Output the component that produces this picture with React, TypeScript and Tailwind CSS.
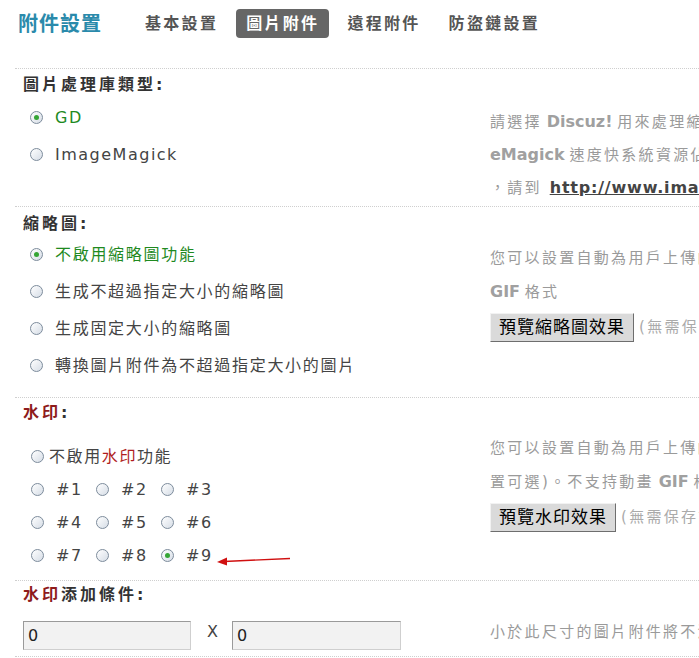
import React from "react";

function Radio({ checked = false }: { checked?: boolean }) {
  return (
    <span className="inline-flex w-[13px] h-[13px] shrink-0 items-center justify-center rounded-full border border-[#7d8c9c] bg-gradient-to-br from-white to-[#d6dde6]">
      {checked && <span className="block w-[5px] h-[5px] rounded-full bg-[#35a535]" />}
    </span>
  );
}

function Opt({ children, checked = false, latin = false }: { children: React.ReactNode; checked?: boolean; latin?: boolean }) {
  return (
    <div className="h-[37px] flex items-center">
      <span className="ml-[7px] flex">
        <Radio checked={checked} />
      </span>
      <span
        className={
          (latin ? "tracking-[1.5px] " : "tracking-[1.7px] ") +
          (checked ? "text-[#1f8a1f] " : "text-[#444] ") +
          "ml-[12px] text-[16px] leading-[20px]"
        }
      >
        {children}
      </span>
    </div>
  );
}

function Num({ n, checked = false }: { n: number; checked?: boolean }) {
  return (
    <div className="w-[65px] flex items-center shrink-0">
      <Radio checked={checked} />
      <span className="ml-[12px] text-[16px] tracking-[1.5px] text-[#444]">#{n}</span>
    </div>
  );
}

function Btn({ children }: { children: React.ReactNode }) {
  return (
    <span className="inline-flex items-center h-[29px] px-[8px] bg-[#dadada] border border-t-[#f2f2f2] border-l-[#f2f2f2] border-r-[#6e6e6e] border-b-[#6e6e6e] text-[17px] tracking-[1px] text-black">
      {children}
    </span>
  );
}

const Title = ({ children }: { children: React.ReactNode }) => (
  <div className="h-[22px] leading-[22px] text-[16px] font-bold tracking-[3px] text-[#333]">{children}</div>
);

export default function App() {
  return (
    <div className="relative w-[699px] h-[658px] overflow-hidden bg-white font-[family-name:DejaVu_Sans,Noto_Sans_CJK_TC,sans-serif]">
      {/* Header */}
      <div className="h-[68px] pt-[9px] pl-[18px]">
        <div className="flex items-center h-[29px]">
          <div className="text-[20px] font-bold tracking-[1px] text-[#2a8aab]">附件設置</div>
          <div className="ml-[33px] flex items-center gap-[8px]">
            <span className="h-[29px] px-[10px] flex items-center text-[16px] font-bold tracking-[2.3px] text-[#555]">基本設置</span>
            <span className="h-[29px] px-[10px] flex items-center rounded-[4px] bg-[#666] text-[16px] font-bold tracking-[2.3px] text-white">圖片附件</span>
            <span className="h-[29px] px-[10px] flex items-center text-[16px] font-bold tracking-[2.3px] text-[#555]">遠程附件</span>
            <span className="h-[29px] px-[10px] flex items-center text-[16px] font-bold tracking-[2.3px] text-[#555]">防盜鏈設置</span>
          </div>
        </div>
      </div>

      {/* Section 1 */}
      <div className="ml-[15px] h-[138px] border-t border-dotted border-[#cfcfcf] pl-[8px]">
        <div className="pt-[5px]">
          <Title>圖片處理庫類型:</Title>
        </div>
        <div className="mt-[3px] flex">
          <div className="w-[467px] shrink-0">
            <Opt checked latin>GD</Opt>
            <Opt latin>ImageMagick</Opt>
          </div>
          <div className="pt-[6px] whitespace-nowrap text-[15px] text-[#9a9a9a]">
            <div className="h-[33px] leading-[33px]">
              <span className="tracking-[2.3px]">請選擇</span>{" "}
              <span className="text-[16px] font-bold text-[#a0a0a0]">Discuz!</span>{" "}
              <span className="tracking-[2.3px]">用來處理縮略圖和水印的圖像處理庫</span>
            </div>
            <div className="h-[33px] leading-[33px]">
              <span className="text-[16px] font-bold text-[#a0a0a0]">eMagick</span>{" "}
              <span className="tracking-[2.3px]">速度快系統資源佔用少</span>
            </div>
            <div className="h-[33px] leading-[33px]">
              <span className="tracking-[2.3px]">，請到</span>{" "}
              <span className="ml-[3px] text-[16px] font-bold tracking-[0.8px] text-[#444] underline">http://www.imagemagick.org/</span>
            </div>
          </div>
        </div>
      </div>

      {/* Section 2 */}
      <div className="ml-[15px] h-[191px] border-t border-dotted border-[#cfcfcf] pl-[8px]">
        <div className="pt-[6px]">
          <Title>縮略圖:</Title>
        </div>
        <div className="mt-[1px] flex">
          <div className="w-[467px] shrink-0">
            <Opt checked>不啟用縮略圖功能</Opt>
            <Opt>生成不超過指定大小的縮略圖</Opt>
            <Opt>生成固定大小的縮略圖</Opt>
            <Opt>轉換圖片附件為不超過指定大小的圖片</Opt>
          </div>
          <div className="pt-[6px] whitespace-nowrap text-[15px] text-[#9a9a9a]">
            <div className="h-[33px] leading-[33px] tracking-[2.3px]">您可以設置自動為用戶上傳的圖片附件生成縮略圖</div>
            <div className="h-[33px] leading-[33px]">
              <span className="text-[16px] font-bold text-[#a0a0a0]">GIF</span>{" "}
              <span className="tracking-[2.3px]">格式</span>
            </div>
            <div className="mt-[5px] flex items-center">
              <Btn>預覽縮略圖效果</Btn>
              <span className="ml-[5px] tracking-[2.3px] text-[#aaa]">(無需保存設置即可預覽)</span>
            </div>
          </div>
        </div>
      </div>

      {/* Section 3 */}
      <div className="ml-[15px] h-[183px] border-t border-dotted border-[#cfcfcf] pl-[8px]">
        <div className="pt-[4px]">
          <div className="h-[22px] leading-[22px] text-[16px] font-bold tracking-[3px] text-[#8e1b1b]">
            水印<span className="text-[#333]">:</span>
          </div>
        </div>
        <div className="flex">
          <div className="w-[467px] shrink-0 pt-[16px]">
            <div className="h-[33px] flex items-center pl-[8px]">
              <Radio />
              <span className="ml-[5px] text-[16px] tracking-[1.6px] text-[#444]">
                不啟用<span className="text-[#b01e1e]">水印</span>功能
              </span>
            </div>
            <div className="h-[33px] flex items-center pl-[8px]">
              <Num n={1} />
              <Num n={2} />
              <Num n={3} />
            </div>
            <div className="h-[33px] flex items-center pl-[8px]">
              <Num n={4} />
              <Num n={5} />
              <Num n={6} />
            </div>
            <div className="h-[33px] flex items-center pl-[8px]">
              <Num n={7} />
              <Num n={8} />
              <Num n={9} checked />
            </div>
          </div>
          <div className="pt-[8px] whitespace-nowrap text-[15px] text-[#9a9a9a]">
            <div className="h-[33px] leading-[33px] tracking-[2.3px]">您可以設置自動為用戶上傳的圖片附件添加水印</div>
            <div className="h-[33px] leading-[33px]">
              <span className="tracking-[2.3px]">置可選)。不支持動畫</span>{" "}
              <span className="text-[16px] font-bold text-[#a0a0a0]">GIF</span>{" "}
              <span className="tracking-[2.3px]">格式</span>
            </div>
            <div className="mt-[5px] flex items-center">
              <Btn>預覽水印效果</Btn>
              <span className="ml-[5px] tracking-[2.3px] text-[#aaa]">(無需保存設置即可預覽)</span>
            </div>
          </div>
        </div>
      </div>

      {/* Section 4 */}
      <div className="ml-[15px] h-[77px] border-t border-b border-dotted border-[#cfcfcf] pl-[8px]">
        <div className="pt-[3px]">
          <div className="h-[22px] leading-[22px] text-[16px] font-bold tracking-[3px] text-[#333]">
            <span className="text-[#8e1b1b]">水印</span>添加條件:
          </div>
        </div>
        <div className="flex">
          <div className="w-[467px] shrink-0 pt-[15px] flex items-start">
            <input
              readOnly
              value="0"
              className="w-[168px] h-[29px] border border-[#9a9a9a] border-b-[#cfcfcf] border-r-[#cfcfcf] bg-[#f2f2f2] pl-[4px] text-[16px] text-[#222] outline-none"
            />
            <span className="ml-[16px] mr-[14px] mt-[-1px] text-[16px] text-[#444]">X</span>
            <input
              readOnly
              value="0"
              className="w-[169px] h-[29px] border border-[#9a9a9a] border-b-[#cfcfcf] border-r-[#cfcfcf] bg-[#f2f2f2] pl-[4px] text-[16px] text-[#222] outline-none"
            />
          </div>
          <div className="pt-[10px] whitespace-nowrap text-[15px] text-[#9a9a9a]">
            <div className="h-[33px] leading-[33px] tracking-[2.3px]">小於此尺寸的圖片附件將不添加水印</div>
          </div>
        </div>
      </div>

      {/* red annotation arrow */}
      <svg className="absolute left-[214px] top-[552px]" width="80" height="16" viewBox="0 0 80 16">
        <line x1="10" y1="9.5" x2="76" y2="6.5" stroke="#d01010" strokeWidth="1.4" />
        <polygon points="3,10 13,5.5 13,13.5" fill="#d01010" />
      </svg>
    </div>
  );
}
